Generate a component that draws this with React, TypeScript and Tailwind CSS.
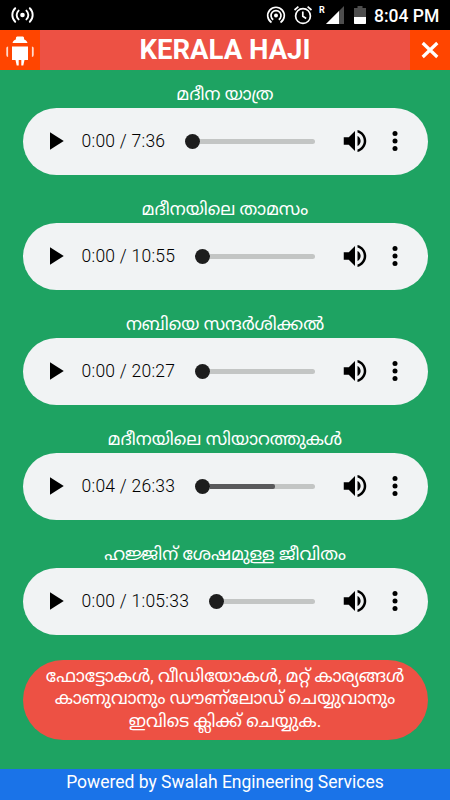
import React from 'react';

interface Track {
  title: string;
  current: string;
  duration: string;
  timeClass: string;
  buffered: number;
}

const tracks: Track[] = [
  { title: 'മദീന യാത്ര', current: '0:00', duration: '7:36', timeClass: 'w-[85px]', buffered: 0 },
  { title: 'മദീനയിലെ താമസം', current: '0:00', duration: '10:55', timeClass: 'w-[95px]', buffered: 0 },
  { title: 'നബിയെ സന്ദർശിക്കൽ', current: '0:00', duration: '20:27', timeClass: 'w-[95px]', buffered: 0 },
  { title: 'മദീനയിലെ സിയാറത്തുകൾ', current: '0:04', duration: '26:33', timeClass: 'w-[95px]', buffered: 62 },
  { title: 'ഹജ്ജിന് ശേഷമുള്ള ജീവിതം', current: '0:00', duration: '1:05:33', timeClass: 'w-[109px]', buffered: 0 },
];

const linkLines = [
  'ഫോട്ടോകൾ, വീഡിയോകൾ, മറ്റ് കാര്യങ്ങൾ',
  'കാണുവാനും ഡൗണ്\u200cലോഡ് ചെയ്യുവാനും',
  'ഇവിടെ ക്ലിക്ക് ചെയ്യുക.',
];

function StatusBar() {
  return (
    <div className="flex h-[30px] shrink-0 items-center bg-black px-[10px] text-white">
      <svg className="ml-px" width="23" height="18" viewBox="0 0 23 18" fill="none" stroke="currentColor" strokeWidth="1.9" strokeLinecap="round">
        <circle cx="11.5" cy="9" r="2.3" fill="currentColor" stroke="none" />
        <path d="M7.6 4.6a6 6 0 0 0 0 8.8M15.4 4.6a6 6 0 0 1 0 8.8M4.2 2.2a9.5 9.5 0 0 0 0 13.6M18.8 2.2a9.5 9.5 0 0 1 0 13.6" />
      </svg>

      <svg className="ml-auto" width="20" height="20" viewBox="0 0 20 20" fill="none" stroke="currentColor" strokeWidth="1.7">
        <circle cx="10" cy="10.5" r="2" fill="currentColor" stroke="none" />
        <path d="M5.5 17.5a8.3 8.3 0 1 1 9 0M7.2 14.7a5 5 0 1 1 5.6 0" />
      </svg>

      <svg className="ml-[7px]" width="20" height="20" viewBox="0 0 20 20" fill="none" stroke="currentColor" strokeWidth="1.7">
        <circle cx="10" cy="11" r="7.4" />
        <path d="M9.8 6.5V11.3l3.4 2.2M1.5 5 5.4 1.7M18.5 5 14.6 1.7" />
      </svg>

      <span className="mb-[10px] ml-[6px] w-[7px] font-['Roboto'] text-[9px] leading-none font-bold">R</span>

      <svg width="18" height="18" viewBox="0 0 18 18">
        <path d="M0 18 18 0v18z" fill="#4d4d4d" />
        <path d="M0 18 13 5V18z" fill="#fff" />
      </svg>

      <svg className="ml-[10px]" width="12" height="18" viewBox="0 0 12 18">
        <path d="M0 2h3.5V0h5v2H12v9H0z" fill="#4d4d4d" />
        <path d="M0 11h12v6.3a.7.7 0 0 1-.7.7H.7a.7.7 0 0 1-.7-.7z" fill="#fff" />
      </svg>

      <span className="ml-[8px] w-[66px] pt-px font-['Roboto'] text-[17.5px] leading-[30px] font-medium whitespace-nowrap">8:04 PM</span>
    </div>
  );
}

function Header() {
  return (
    <header className="flex h-[39.5px] shrink-0 bg-[#ed5144] text-white">
      <button className="flex w-10 items-center justify-center bg-[#ff4500]">
        <svg width="28" height="32" viewBox="0 0 28 32" fill="currentColor">
          <path d="M6.5 9C7 7.2 8.2 6 9.8 5.4Q9.8 2.6 11 2.6h6q1.2 0 1.2 2.8c1.6.6 2.8 1.8 3.3 3.6z" />
          <path d="M6 12.5h16V26h-3.5l-1.2 5.5h-2V26h-2.6v5.5h-2L9.5 26H6z" />
          <path d="M.3 14q0-1.5 1.8-1.5V23Q.3 23 .3 21zM27.7 14q0-1.5-1.8-1.5V23q1.8 0 1.8-2z" opacity=".8" />
        </svg>
      </button>
      <h1 className="flex-1 pt-px text-center font-['Roboto'] text-[27.5px] leading-[38px] font-bold">KERALA HAJI</h1>
      <button className="flex w-10 items-center justify-center bg-[#ff4500]">
        <svg className="mt-px" width="18" height="18" viewBox="0 0 18 18" stroke="currentColor" strokeWidth="3.2">
          <path d="m1.7 2 14.6 14M16.3 2 1.7 16" />
        </svg>
      </button>
    </header>
  );
}

function AudioPlayer({ track }: { track: Track }) {
  return (
    <div className="flex h-[67.5px] items-center rounded-full bg-[#f1f3f4] px-[17.5px]">
      <svg width="30" height="30" viewBox="0 0 24 24">
        <path d="M8 5v14l11-7z" />
      </svg>
      <span className={`ml-[11.5px] shrink-0 font-['Roboto'] text-[17.5px] leading-none font-light tracking-[0.25px] whitespace-nowrap text-black ${track.timeClass}`}>
        {track.current} / {track.duration}
      </span>
      <div className="ml-[18.5px] flex h-[15px] flex-1 items-center">
        <div className="size-[15px] shrink-0 rounded-full bg-[#1d1d1d]" />
        <div className="h-[5px] flex-1 overflow-hidden rounded-r-full bg-[#c3c5c4]">
          <div className="h-full rounded-r-[2px] bg-[#59595b]" style={{ width: `${track.buffered}%` }} />
        </div>
      </div>
      <svg className="ml-[25px]" width="30" height="30" viewBox="0 0 24 24">
        <path d="M3 9v6h4l5 5V4L7 9H3zm13.5 3c0-1.77-1.02-3.29-2.5-4.03v8.05c1.48-.73 2.5-2.25 2.5-4.02zM14 3.23v2.06c2.89.86 5 3.54 5 6.71s-2.11 5.85-5 6.71v2.06c4.01-.91 7-4.49 7-8.77s-2.99-7.86-7-8.77z" />
      </svg>
      <svg className="ml-[10px]" width="30" height="30" viewBox="0 0 24 24">
        <circle cx="12" cy="6" r="2" />
        <circle cx="12" cy="12" r="2" />
        <circle cx="12" cy="18" r="2" />
      </svg>
    </div>
  );
}

export default function App() {
  return (
    <div className="flex h-[800px] w-[450px] flex-col overflow-hidden bg-[#1ea362] font-['Roboto','Noto_Sans_Malayalam_UI','Noto_Sans_Malayalam',sans-serif]">
      <StatusBar />
      <Header />

      <main className="flex-1 px-[22.5px] pt-[11px]">
        {tracks.map((track) => (
          <section key={track.title} className="h-[115px]">
            <h2 className="h-[27px] text-center text-[17.5px] leading-[27px] whitespace-nowrap text-white">{track.title}</h2>
            <AudioPlayer track={track} />
          </section>
        ))}

        <button className="mt-[4px] flex h-20 w-full flex-col items-center rounded-[40px] bg-[#ed5144] pt-[5px] text-[17.5px] leading-[22.5px] text-white">
          {linkLines.map((line) => (
            <span key={line} className="whitespace-nowrap">{line}</span>
          ))}
        </button>
      </main>

      <footer className="h-[31px] shrink-0 bg-[#1a73e8] text-center text-[17.5px] leading-[26px] text-white">
        Powered by Swalah Engineering Services
      </footer>
    </div>
  );
}
